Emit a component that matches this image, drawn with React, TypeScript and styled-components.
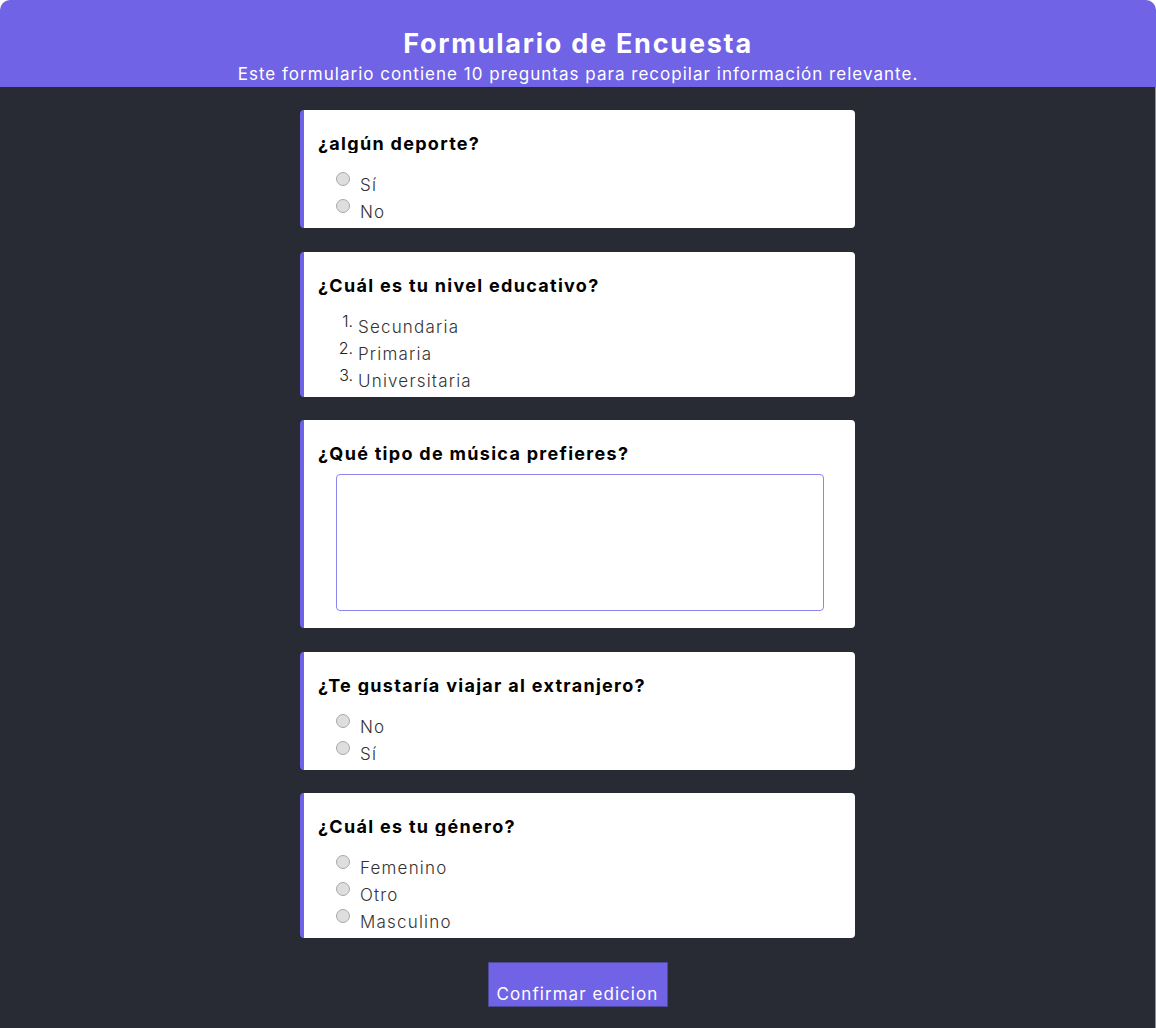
import React from "react";
import styled, { createGlobalStyle } from "styled-components";

const GlobalStyle = createGlobalStyle`
  html, body { margin: 0; padding: 0; background: #ffffff; }
  body { font-family: "Inter", "Open Sans", sans-serif; }
  * { box-sizing: border-box; }
`;

const Page = styled.div`
  display: flex;
  flex-direction: column;
  min-height: 100vh;
  width: 1156px;
`;

const Header = styled.header`
  height: 87px;
  background: #7063e6;
  border-radius: 10px 10px 0 0;
  color: #ffffff;
  display: flex;
  flex-direction: column;
  align-items: center;
  padding-top: 28px;
`;

const Title = styled.h1`
  margin: 0;
  font-size: 27px;
  line-height: 32px;
  font-weight: 700;
  letter-spacing: 0.065em;
`;

const Subtitle = styled.p`
  margin: 4px 0 0;
  font-size: 17px;
  line-height: 20px;
  font-weight: 400;
  letter-spacing: 0.06em;
`;

const Main = styled.main`
  flex: 1;
  background: #282b33;
  border-right: 1px solid #8e8e94;
  display: flex;
  flex-direction: column;
  align-items: center;
  gap: 23.5px;
  padding: 23px 0 23px;
`;

const Card = styled.section<{ $bottom?: number }>`
  width: 555px;
  background: #ffffff;
  border-left: 4px solid #6c63e6;
  border-radius: 4px;
  overflow: hidden;
  padding: 24px 14px ${(p) => p.$bottom ?? 5}px 14px;
  display: flex;
  flex-direction: column;
`;

const Question = styled.h3`
  margin: 0;
  height: 19px;
  line-height: 20px;
  overflow: hidden;
  font-size: 18px;
  font-weight: 700;
  letter-spacing: 0.072em;
  color: #000000;
`;

const Options = styled.div`
  display: flex;
  flex-direction: column;
  margin-top: 16px;
  padding-left: 18px;
`;

const OptionRow = styled.label`
  display: flex;
  align-items: flex-start;
  height: 27px;
`;

const Radio = styled.span`
  width: 14px;
  height: 14px;
  margin-top: 3px;
  margin-right: 10px;
  border-radius: 50%;
  background: #dedede;
  border: 1px solid #a9a9a9;
  flex: none;
`;

const OptionText = styled.span`
  font-size: 17px;
  line-height: 27px;
  padding-top: 3px;
  font-weight: 300;
  letter-spacing: 0.07em;
  color: #333333;
`;

const Marker = styled.span`
  width: 22px;
  flex: none;
  text-align: right;
  padding-right: 5px;
  font-size: 16px;
  line-height: 20px;
  font-weight: 300;
  color: #222222;
`;

const TextArea = styled.textarea`
  margin: 11px 0 0 18px;
  width: 488px;
  height: 137px;
  border: 1px solid #8d84ee;
  border-radius: 4px;
  resize: none;
  font-family: inherit;
`;

const SubmitButton = styled.button`
  width: 180px;
  height: 45px;
  background: #7063e6;
  border: 1px solid #4d4a9a;
  color: #ffffff;
  font-family: inherit;
  font-size: 17px;
  font-weight: 400;
  letter-spacing: 0.062em;
  display: flex;
  align-items: flex-end;
  justify-content: center;
  padding: 0 0 2px;
  cursor: pointer;
`;

type Q =
  | { kind: "radio"; title: string; options: string[] }
  | { kind: "list"; title: string; options: string[] }
  | { kind: "text"; title: string };

const questions: Q[] = [
  { kind: "radio", title: "¿algún deporte?", options: ["Sí", "No"] },
  { kind: "list", title: "¿Cuál es tu nivel educativo?", options: ["Secundaria", "Primaria", "Universitaria"] },
  { kind: "text", title: "¿Qué tipo de música prefieres?" },
  { kind: "radio", title: "¿Te gustaría viajar al extranjero?", options: ["No", "Sí"] },
  { kind: "radio", title: "¿Cuál es tu género?", options: ["Femenino", "Otro", "Masculino"] },
];

export default function App() {
  return (
    <>
      <GlobalStyle />
      <Page>
        <Header>
          <Title>Formulario de Encuesta</Title>
          <Subtitle>Este formulario contiene 10 preguntas para recopilar información relevante.</Subtitle>
        </Header>
        <Main>
          {questions.map((q, i) => (
            <Card key={i} $bottom={q.kind === "text" ? 17 : 5}>
              <Question>{q.title}</Question>
              {q.kind === "text" ? (
                <TextArea />
              ) : (
                <Options>
                  {q.options.map((o, j) => (
                    <OptionRow key={j}>
                      {q.kind === "radio" ? <Radio /> : <Marker>{j + 1}.</Marker>}
                      <OptionText>{o}</OptionText>
                    </OptionRow>
                  ))}
                </Options>
              )}
            </Card>
          ))}
          <SubmitButton>Confirmar edicion</SubmitButton>
        </Main>
      </Page>
    </>
  );
}
